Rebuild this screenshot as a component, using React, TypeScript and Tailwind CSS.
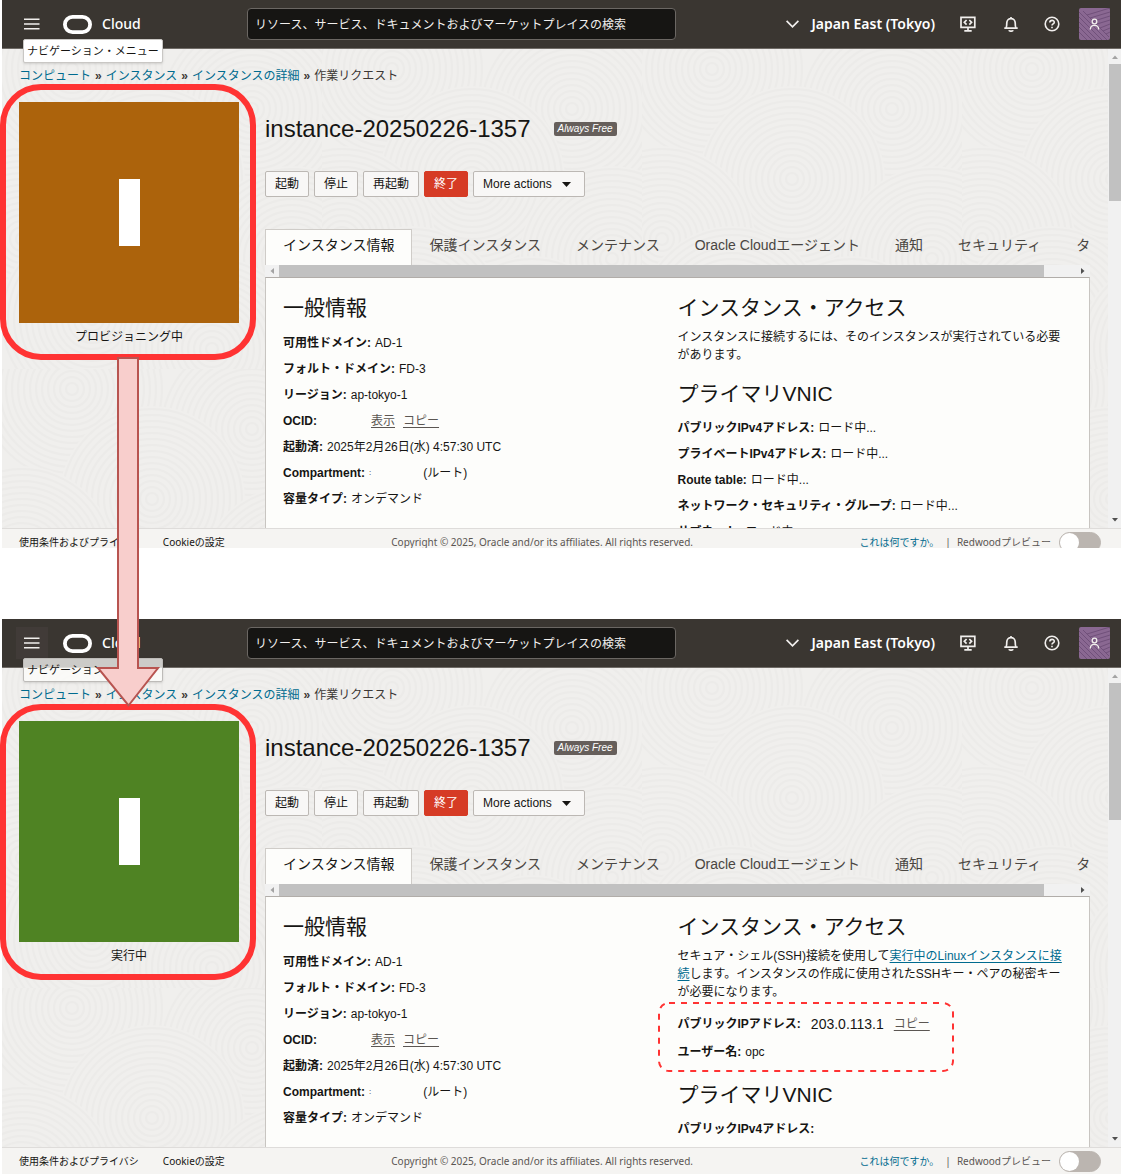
import { ReactNode, useId, useState } from 'react'

type Status = 'provisioning' | 'running'

const TABS: string[] = [
	'インスタンス情報',
	'保護インスタンス',
	'メンテナンス',
	'Oracle Cloudエージェント',
	'通知',
	'セキュリティ',
	'タグ',
]

// centers of the ring groups in the background texture
const RINGS: { x: number, y: number }[] = [
	{ x: 70, y: 20 },
	{ x: 250, y: 60 },
	{ x: 150, y: 130 },
	{ x: 20, y: 190 },
	{ x: 290, y: 210 },
	{ x: 90, y: 270 },
	{ x: 210, y: 300 },
]

const RADII: number[] = [6, 12, 18, 24, 30, 36, 42, 48, 54, 60, 66, 72, 78, 84, 90]

function Texture() {
	const id = useId()

	return (
		<svg className="absolute inset-0 h-full w-full" aria-hidden="true">
			<defs>
				<pattern id={id} width="320" height="320" patternUnits="userSpaceOnUse">
					<rect width="320" height="320" fill="#f0efed" />
					{RINGS.map((ring) => (
						<g key={`${ring.x}-${ring.y}`} fill="none" stroke="#ecebe9" strokeWidth="2">
							<circle cx={ring.x} cy={ring.y} r="93" fill="#f0efed" stroke="none" />
							{RADII.map((r) => <circle key={r} cx={ring.x} cy={ring.y} r={r} />)}
						</g>
					))}
				</pattern>
			</defs>
			<rect width="100%" height="100%" fill={`url(#${id})`} />
		</svg>
	)
}

function Header({ active }: { active: boolean }) {
	return (
		<header className="relative z-10 flex h-[49px] items-center border-b border-[#6f6b66] bg-[#3a3631] pr-[11px] pl-3.5 font-['Noto_Sans','Noto_Sans_CJK_JP',sans-serif] text-white">
			<button
				aria-label="ナビゲーション・メニュー"
				className={`flex h-8 w-8 items-center justify-center ${active ? 'bg-[#413b38]' : ''}`}
			>
				<svg width="16" height="12" viewBox="0 0 16 12" stroke="#f1efed" strokeWidth="1.6">
					<path d="M0 1.2h15.5M0 6h15.5M0 10.8h15.5" />
				</svg>
			</button>
			<a href="#" className="ml-[15px] flex items-center gap-2.5 text-sm font-medium">
				<svg width="29" height="19" viewBox="0 0 29 19" fill="none" stroke="#fff" strokeWidth="3.8">
					<rect x="1.9" y="1.9" width="25.2" height="15.2" rx="7.6" />
				</svg>
				Cloud
			</a>
			<input
				type="text"
				aria-label="検索"
				placeholder="リソース、サービス、ドキュメントおよびマーケットプレイスの検索"
				className="absolute left-[245px] h-8 w-[429px] rounded-sm border border-[#6b6763] bg-[#161513] px-[7px] text-xs placeholder:text-[#f1efed]"
			/>
			<div className="ml-auto flex items-center">
				<button className="flex items-center gap-3 text-sm font-semibold">
					<svg width="13" height="8" viewBox="0 0 13 8" fill="none" stroke="#f1efed" strokeWidth="1.7">
						<path d="M.6.8 6.500 6.800 12.400.8" />
					</svg>
					Japan East (Tokyo)
				</button>
				<button aria-label="開発者ツール" className="ml-6">
					<svg width="18" height="18" viewBox="0 0 18 18" fill="none" stroke="#f1efed" strokeWidth="1.7">
						<path d="M2 2.300h13.800v10H2zM9 12.300v3.300M5.300 15.900h7.400M7.600 5 5.300 7.300l2.300 2.300M10.300 5l2.300 2.300-2.300 2.300" />
					</svg>
				</button>
				<button aria-label="お知らせ" className="ml-[26px]">
					<svg width="16" height="16" viewBox="0 0 16 16" fill="none" stroke="#f1efed" strokeWidth="1.7">
						<path d="M1.300 12.200h13.400M3 12.200c.7-1 .8-2 .8-5.400a4.200 4.200 0 0 1 8.400 0c0 3.400.1 4.400.8 5.400M5.900 14.200c.5 1.300 3.700 1.300 4.200 0M8 2.600V1" />
					</svg>
				</button>
				<button aria-label="ヘルプ" className="ml-[25px]">
					<svg width="16" height="16" viewBox="0 0 16 16" fill="none" stroke="#f1efed" strokeWidth="1.6">
						<circle cx="8" cy="8" r="6.800" />
						<path d="M5.800 6.600c0-3 4.500-2.900 4.500-.3 0 1.600-2.300 1.600-2.300 3.200M8 10.700v1.500" />
					</svg>
				</button>
				<button aria-label="プロファイル" className="ml-[19px]">
					<svg width="31" height="32" viewBox="0 0 31 32" fill="none">
						<rect width="31" height="32" rx="2" fill="#8a6892" />
						<path
							d="M0 4l28 28M0 9l23 23M0 14l18 18M0 19l13 13M0 24l8 8M4 3l26 26M8 7 31 0M11 10l20-6M15 13l16-5M18 16l13-4M21 20l10-4M24 23l7-3M27 26l4-2"
							stroke="#70507a"
						/>
						<circle cx="15.500" cy="13.500" r="2.300" stroke="#f1efed" strokeWidth="1.300" />
						<path d="M11.300 21.500c0-5.500 8.400-5.500 8.400 0" stroke="#f1efed" strokeWidth="1.300" />
					</svg>
				</button>
			</div>
			<div
				role="tooltip"
				className={`absolute top-[39px] left-[21px] rounded-xs border px-[3px] text-[11px] leading-[22px] whitespace-nowrap text-[#161513] shadow-sm ${active ? 'border-[#bdbbb8] bg-[#fdfdfb]/75' : 'border-[#c9c7c4] bg-white'}`}
			>
				ナビゲーション・メニュー
			</div>
		</header>
	)
}

function Breadcrumbs() {
	return (
		<nav className="flex gap-1 text-xs leading-[18px] text-[#3c3835]">
			<a href="#" className="text-[#006b8f]">コンピュート</a>
			<span className="font-bold">»</span>
			<a href="#" className="text-[#006b8f]">インスタンス</a>
			<span className="font-bold">»</span>
			<a href="#" className="text-[#006b8f]">インスタンスの詳細</a>
			<span className="font-bold">»</span>
			<span>作業リクエスト</span>
		</nav>
	)
}

function Row({ label, children }: { label: string, children?: ReactNode }) {
	return (
		<div className="flex h-[26px] items-center gap-1 whitespace-nowrap">
			<dt className="font-bold">{label}:</dt>
			<dd className="flex items-center">{children}</dd>
		</div>
	)
}

function Heading({ children }: { children: ReactNode }) {
	return <h2 className="mb-1.5 text-[21px] leading-7">{children}</h2>
}

function GeneralInfo() {
	return (
		<section>
			<Heading>一般情報</Heading>
			<dl className="mt-2">
				<Row label="可用性ドメイン">AD-1</Row>
				<Row label="フォルト・ドメイン">FD-3</Row>
				<Row label="リージョン">ap-tokyo-1</Row>
				<Row label="OCID">
					<span className="ml-[50px] flex gap-2 text-[#5b5652]">
						<button className="underline underline-offset-2">表示</button>
						<button className="underline underline-offset-2">コピー</button>
					</span>
				</Row>
				<Row label="起動済">2025年2月26日(水) 4:57:30 UTC</Row>
				<Row label="Compartment">
					<span className="text-[8px]">:</span>
					<span className="ml-[52px]">(ルート)</span>
				</Row>
				<Row label="容量タイプ">オンデマンド</Row>
			</dl>
		</section>
	)
}

function Access({ status }: { status: Status }) {
	if (status === 'provisioning') {
		return (
			<section>
				<Heading>インスタンス・アクセス</Heading>
				<p className="leading-[18px]">
					インスタンスに接続するには、そのインスタンスが実行されている必要があります。
				</p>
			</section>
		)
	}

	return (
		<section>
			<Heading>インスタンス・アクセス</Heading>
			<p className="leading-[18px]">
				セキュア・シェル(SSH)接続を使用して<a href="#" className="text-[#006b8f] underline underline-offset-2">実行中のLinuxインスタンスに接続</a>します。インスタンスの作成に使用されたSSHキー・ペアの秘密キーが必要になります。
			</p>
			<dl className="mt-2.5 space-y-0.5">
				<Row label="パブリックIPアドレス">
					<span className="ml-1.5 text-sm">203.0.113.1</span>
					<button className="ml-2.5 text-[#5b5652] underline underline-offset-2">コピー</button>
				</Row>
				<Row label="ユーザー名">opc</Row>
			</dl>
		</section>
	)
}

function Vnic({ status }: { status: Status }) {
	return (
		<section className="mt-4">
			<Heading>プライマリVNIC</Heading>
			{
				status === 'provisioning' ? (
					<dl className="mt-[7px]">
						<Row label="パブリックIPv4アドレス">ロード中...</Row>
						<Row label="プライベートIPv4アドレス">ロード中...</Row>
						<Row label="Route table">ロード中...</Row>
						<Row label="ネットワーク・セキュリティ・グループ">ロード中...</Row>
						<Row label="サブネット">ロード中...</Row>
					</dl>
				) : (
					<dl className="mt-[7px]">
						<Row label="パブリックIPv4アドレス" />
					</dl>
				)
			}
		</section>
	)
}

const BUTTON = 'flex h-[26px] items-center rounded-xs border border-[#bcb8b4] bg-[#f8f7f6] px-[9px]'

function Details({ status }: { status: Status }) {
	const [tab, setTab] = useState<number>(0)

	return (
		<div className="min-w-0 flex-1">
			<div className="mt-[11px] flex items-center gap-[23px]">
				<h1 className="text-2xl leading-8">instance-20250226-1357</h1>
				<span className="rounded-xs bg-[#665f5b] px-1 text-[10px] leading-[14px] text-white italic">Always Free</span>
			</div>
			<div className="mt-[26px] flex gap-[5px]">
				<button className={BUTTON}>起動</button>
				<button className={BUTTON}>停止</button>
				<button className={BUTTON}>再起動</button>
				<button className="flex h-[26px] items-center rounded-xs border border-[#d63b25] bg-[#d63b25] px-[9px] text-white">終了</button>
				<button className={`${BUTTON} gap-2.5`}>
					More actions
					<svg width="9" height="5" viewBox="0 0 9 5" className="mr-1">
						<path d="M0 0h9L4.500 5z" fill="#161513" />
					</svg>
				</button>
			</div>
			<div role="tablist" className="mt-8 flex overflow-hidden text-sm">
				{TABS.map((name, index) => (
					<button
						key={name}
						role="tab"
						aria-selected={index === tab}
						onClick={() => setTab(index)}
						className={`h-9 shrink-0 border-t px-[17px] pb-1.5 whitespace-nowrap ${index === tab ? 'border-x border-[#cfccc8] bg-[#fdfdfb]' : 'border-r border-transparent text-[#4a4642]'}`}
					>
						{name}
					</button>
				))}
			</div>
			<div className="flex h-3 items-center bg-[#f1f1f1]">
				<svg width="14" height="6" viewBox="0 0 14 6"><path d="M9 0v6L5.500 3z" fill="#a3a3a3" /></svg>
				<div className="h-full flex-1 bg-[#c1c1c1]" />
				<div className="flex w-[46px] justify-end">
					<svg width="14" height="6" viewBox="0 0 14 6"><path d="M5 0v6l3.500-3z" fill="#505050" /></svg>
				</div>
			</div>
			<div className="grid grid-cols-2 border border-[#c8c5c1] border-t-[#b1ada9] bg-[#fdfdfb] px-[17px] pt-4 pb-8">
				<GeneralInfo />
				<div>
					<Access status={status} />
					<Vnic status={status} />
				</div>
			</div>
		</div>
	)
}

function Footer() {
	const id = useId()

	return (
		<footer className="relative flex h-[28px] items-center border-t border-[#dedcda] bg-[#f5f4f2] pr-5 pl-[17px] font-['Noto_Sans','Noto_Sans_CJK_JP',sans-serif] text-[10px] whitespace-nowrap text-[#5b5652]">
			<a href="#" className="text-[#161513]">使用条件およびプライバシ</a>
			<a href="#" className="ml-6 text-[#161513]">Cookieの設定</a>
			<span className="mx-auto">Copyright © 2025, Oracle and/or its affiliates. All rights reserved.</span>
			<a href="#" className="text-[#006b8f]">これは何ですか。</a>
			<span className="mr-1.5 ml-1.5">|</span>
			<label htmlFor={id}>Redwoodプレビュー</label>
			<input
				id={id}
				type="checkbox"
				className="ml-2 h-[21px] w-[42px] appearance-none rounded-full border border-[#bbb5b0] bg-[#bbb5b0] before:block before:size-[19px] before:rounded-full before:bg-white checked:before:ml-auto"
			/>
		</footer>
	)
}

function Console({ status }: { status: Status }) {
	const running = status === 'running'

	return (
		<div className="relative">
			<Header active={running} />
			<div className="relative flex h-[479px] overflow-hidden">
				<Texture />
				<main className="relative min-w-0 flex-1 pt-[18px] pr-[18px] pl-[17px]">
					<Breadcrumbs />
					<div className="mt-[17px] flex gap-[26px]">
						<aside className="w-[220px] shrink-0">
							<div className={`flex h-[221px] items-center justify-center ${running ? 'bg-[#4f8323]' : 'bg-[#ac630c]'}`}>
								<div className="h-[67px] w-[21px] bg-white" />
							</div>
							<p className="mt-[5px] text-center leading-[18px]">{running ? '実行中' : 'プロビジョニング中'}</p>
						</aside>
						<Details status={status} />
					</div>
				</main>
				<div className="relative flex w-[13px] flex-col items-center bg-[#f1f1f1]">
					<svg width="8" height="15" viewBox="0 0 8 15"><path d="M1 10h6L4 6.500z" fill="#a3a3a3" /></svg>
					<div className="h-[137px] w-3 bg-[#c1c1c1]" />
					<svg width="8" height="15" viewBox="0 0 8 15" className="mt-auto"><path d="M1 5h6L4 8.500z" fill="#505050" /></svg>
				</div>
			</div>
			<Footer />
		</div>
	)
}

function Annotations() {
	return (
		<svg className="pointer-events-none absolute top-0 left-0 z-20" width="960" height="1174" viewBox="0 0 960 1174" fill="none" aria-hidden="true">
			<g stroke="#ff3333" strokeWidth="6">
				<rect x="3" y="87" width="250" height="270" rx="38" />
				<rect x="3" y="707" width="250" height="270" rx="38" />
			</g>
			<rect x="659" y="1003" width="294" height="68" rx="10" stroke="#ff3333" strokeWidth="2" strokeDasharray="6 6" />
			<path d="M118 358h20v310h20l-29.500 37.500L98 668h20z" fill="#f8cecc" stroke="#b85450" strokeWidth="2" />
		</svg>
	)
}

export default function App() {
	return (
		<div lang="ja" className="relative bg-white pr-[3px] pl-0.5 font-['Liberation_Sans','Noto_Sans_CJK_JP',sans-serif] text-xs text-[#161513]">
			<div className="h-[548px] overflow-hidden">
				<Console status="provisioning" />
			</div>
			<div className="mt-[71px] h-[555px] overflow-hidden">
				<Console status="running" />
			</div>
			<Annotations />
		</div>
	)
}
